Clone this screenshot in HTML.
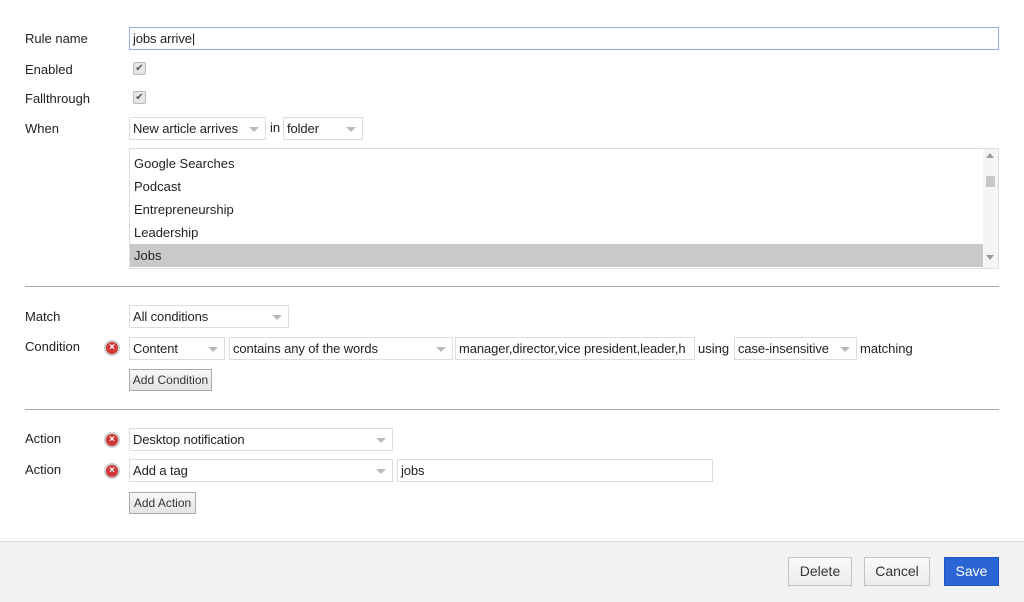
<!DOCTYPE html><html><head><style>
body{margin:0;width:1024px;height:601px;background:#fff;font-family:"Liberation Sans",Arial,sans-serif;font-size:13px;color:#222;position:relative;overflow:hidden}
.a{position:absolute}
.lbl{position:absolute;left:25px;font-size:13px;color:#222}
.sel{position:absolute;border:1px solid #ddd;background:#fff;box-sizing:border-box;height:23px;line-height:21px;padding-left:3px;font-size:13px;white-space:nowrap;letter-spacing:-0.1px}
.sel:after{content:"";position:absolute;right:6px;top:9px;border-left:5px solid transparent;border-right:5px solid transparent;border-top:5px solid #bbb}
.inp{position:absolute;border:1px solid #ddd;box-sizing:border-box;height:23px;line-height:21px;padding-left:3px;background:#fff;overflow:hidden;white-space:nowrap;letter-spacing:-0.1px}
.cb{position:absolute;left:133px;width:11px;height:11px;border:1px solid #bbb;border-radius:2px;background:#e6e6e6;font-size:10px;line-height:11px;text-align:center;color:#555}
.btn{position:absolute;border:1px solid #aaa;background:linear-gradient(#f8f8f8,#e4e4e4);font-size:12px;color:#333;box-sizing:border-box;text-align:center;line-height:20px}
.x{position:absolute;left:104px;width:12px;height:12px;border-radius:50%;background:#d03838;border:2px solid #ccc;color:#fff;font-size:10px;font-weight:bold;line-height:12px;text-align:center}
.hr{position:absolute;left:25px;width:974px;height:1px;background:#aaa}
.it{position:absolute;left:134px;font-size:13px}
.fb{position:absolute;top:557px;height:29px;box-sizing:border-box;border:1px solid #c4c4c4;background:linear-gradient(#fafafa,#ececec);font-size:14px;text-align:center;line-height:27px;color:#333}
</style></head><body>
<div class="lbl" style="top:31px">Rule name</div>
<div class="inp" style="left:129px;top:27px;width:870px;border:1px solid #8fb1e6">jobs arrive|</div>
<div class="lbl" style="top:62px">Enabled</div>
<div class="cb" style="top:62px">✔</div>
<div class="lbl" style="top:91px">Fallthrough</div>
<div class="cb" style="top:91px">✔</div>
<div class="lbl" style="top:121px">When</div>
<div class="sel" style="left:129px;top:117px;width:137px">New article arrives</div>
<div class="a" style="left:270px;top:120px">in</div>
<div class="sel" style="left:283px;top:117px;width:80px">folder</div>
<div class="a" style="left:129px;top:148px;width:870px;height:121px;border:1px solid #ddd;box-sizing:border-box"></div>
<div class="it" style="top:156px">Google Searches</div>
<div class="it" style="top:179px">Podcast</div>
<div class="it" style="top:202px">Entrepreneurship</div>
<div class="it" style="top:225px">Leadership</div>
<div class="a" style="left:130px;top:244px;width:853px;height:23px;background:#c8c9ca"></div>
<div class="it" style="top:248px">Jobs</div>
<div class="a" style="left:983px;top:149px;width:15px;height:119px;background:#f5f5f5"></div>
<div class="a" style="left:986px;top:153px;border-left:4px solid transparent;border-right:4px solid transparent;border-bottom:5px solid #999"></div>
<div class="a" style="left:986px;top:176px;width:9px;height:11px;background:#c8c8c8"></div>
<div class="a" style="left:986px;top:255px;border-left:4px solid transparent;border-right:4px solid transparent;border-top:5px solid #999"></div>
<div class="hr" style="top:286px"></div>
<div class="lbl" style="top:309px">Match</div>
<div class="sel" style="left:129px;top:305px;width:160px">All conditions</div>
<div class="lbl" style="top:339px">Condition</div>
<div class="x" style="top:340px">×</div>
<div class="sel" style="left:129px;top:337px;width:96px">Content</div>
<div class="sel" style="left:229px;top:337px;width:224px">contains any of the words</div>
<div class="inp" style="left:455px;top:337px;width:240px">manager,director,vice president,leader,h</div>
<div class="a" style="left:698px;top:341px">using</div>
<div class="sel" style="left:734px;top:337px;width:123px">case-insensitive</div>
<div class="a" style="left:860px;top:341px">matching</div>
<div class="btn" style="left:129px;top:369px;width:83px;height:22px">Add Condition</div>
<div class="hr" style="top:409px"></div>
<div class="lbl" style="top:431px">Action</div>
<div class="x" style="top:432px">×</div>
<div class="sel" style="left:129px;top:428px;width:264px">Desktop notification</div>
<div class="lbl" style="top:462px">Action</div>
<div class="x" style="top:463px">×</div>
<div class="sel" style="left:129px;top:459px;width:264px">Add a tag</div>
<div class="inp" style="left:397px;top:459px;width:316px">jobs</div>
<div class="btn" style="left:129px;top:492px;width:67px;height:22px">Add Action</div>
<div class="a" style="left:0;top:541px;width:1024px;height:60px;background:#f2f2f2;border-top:1px solid #ddd"></div>
<div class="fb" style="left:788px;width:64px">Delete</div>
<div class="fb" style="left:864px;width:66px">Cancel</div>
<div class="fb" style="left:944px;width:55px;background:#2a65d3;border-color:#1f56bf;color:#fff">Save</div>
</body></html>
